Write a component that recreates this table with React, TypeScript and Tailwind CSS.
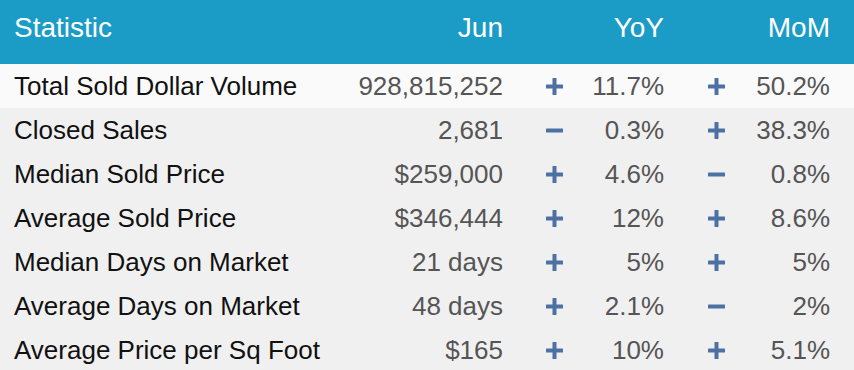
const rows = [
  { label: "Total Sold Dollar Volume", jun: "928,815,252", yoyUp: true, yoy: "11.7%", momUp: true, mom: "50.2%" },
  { label: "Closed Sales", jun: "2,681", yoyUp: false, yoy: "0.3%", momUp: true, mom: "38.3%" },
  { label: "Median Sold Price", jun: "$259,000", yoyUp: true, yoy: "4.6%", momUp: false, mom: "0.8%" },
  { label: "Average Sold Price", jun: "$346,444", yoyUp: true, yoy: "12%", momUp: true, mom: "8.6%" },
  { label: "Median Days on Market", jun: "21 days", yoyUp: true, yoy: "5%", momUp: true, mom: "5%" },
  { label: "Average Days on Market", jun: "48 days", yoyUp: true, yoy: "2.1%", momUp: false, mom: "2%" },
  { label: "Average Price per Sq Foot", jun: "$165", yoyUp: true, yoy: "10%", momUp: true, mom: "5.1%" },
];

function Sign({ up }: { up: boolean }) {
  return (
    <svg width="17" height="17" viewBox="0 0 17 17" className="block">
      <rect x="0" y="6.5" width="17" height="4" rx="0.5" fill="#4d71a2" />
      {up && <rect x="6.5" y="0" width="4" height="17" rx="0.5" fill="#4d71a2" />}
    </svg>
  );
}

export default function App() {
  return (
    <div className="w-[854px] h-[370px] overflow-hidden bg-[#f0f0f0] font-['Liberation_Sans',Arial,sans-serif]">
      <div className="flex h-16 items-center pb-2 bg-[#1a9cc7] text-white text-[28px]">
        <div className="w-[344px] shrink-0 pl-[14px]">Statistic</div>
        <div className="w-[159px] shrink-0 text-right">Jun</div>
        <div className="w-[161px] shrink-0 text-right">YoY</div>
        <div className="w-[166px] shrink-0 text-right">MoM</div>
      </div>
      {rows.map((r, i) => (
        <div
          key={r.label}
          className={`flex h-11 items-center text-[26px] whitespace-nowrap ${i === 0 ? "bg-[#fafafa]" : "bg-[#f0f0f0]"}`}
        >
          <div className="w-[344px] shrink-0 pl-[14px] text-[#111]">{r.label}</div>
          <div className="w-[159px] shrink-0 text-right text-[#555]">{r.jun}</div>
          <div className="w-[36px] shrink-0" />
          <div className="w-[30px] shrink-0 flex justify-center">
            <Sign up={r.yoyUp} />
          </div>
          <div className="w-[95px] shrink-0 text-right text-[#555]">{r.yoy}</div>
          <div className="w-[37px] shrink-0" />
          <div className="w-[30px] shrink-0 flex justify-center">
            <Sign up={r.momUp} />
          </div>
          <div className="w-[99px] shrink-0 text-right text-[#555]">{r.mom}</div>
        </div>
      ))}
    </div>
  );
}
